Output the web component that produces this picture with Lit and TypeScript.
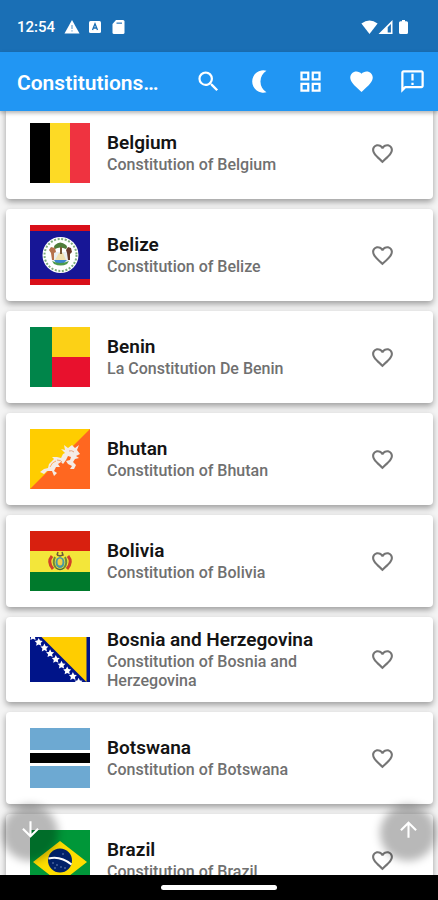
import { LitElement, html, svg, css } from "lit";
import type { SVGTemplateResult } from "lit";
import { customElement, property, state } from "lit/decorators.js";

interface Country {
  name: string;
  document: string;
  flag: SVGTemplateResult;
  flagHeight: number;
}

/* ---------- flags, each on a grid 60 units wide ---------- */

const belgium = svg`
  <rect width="20" height="60" fill="#000"/>
  <rect x="20" width="20" height="60" fill="#fdda25"/>
  <rect x="40" width="20" height="60" fill="#ef3340"/>`;

const belize = svg`
  <rect width="60" height="60" fill="#171696"/>
  <rect width="60" height="6" fill="#d90f19"/>
  <rect y="54" width="60" height="6" fill="#d90f19"/>
  <circle cx="30.5" cy="30" r="18" fill="#fff"/>
  <circle cx="30.5" cy="30" r="16" fill="none" stroke="#7fae7c" stroke-width="2" stroke-dasharray="2 1.6"/>
  <path d="M22 27h17v8q-2 3-8.5 4q-6-1-8.5-4z" fill="#e9eef0"/>
  <path d="M24 35h13l-3 3h-8z" fill="#3a86d0"/>
  <path d="M29 28l4 0l3 7h-11z" fill="#f0e0b0"/>
  <path d="M25 20q5-5 11 0q2 2 0 4q-6-3-11 0q-2-2 0-4z" fill="#4f7d3a"/>
  <path d="M30 22h2v7h-2z" fill="#7b5a38"/>
  <path d="M21 22l4 1l1 4l-2 1l0 7h-2l-1-7l-2-3z" fill="#b5714a"/>
  <path d="M38 22l3 1l1 4l-2 2l0 6h-2l-1-7l-1-3z" fill="#6a3b2b"/>
  <path d="M22 36q8 4 17 0l-2 3q-6 3-13 0z" fill="#4c9b4c"/>`;

const benin = svg`
  <rect width="22" height="60" fill="#00854a"/>
  <rect x="22" width="38" height="30" fill="#fcd116"/>
  <rect x="22" y="30" width="38" height="30" fill="#e8112d"/>`;

const bhutan = svg`
  <rect width="60" height="60" fill="#ff6720"/>
  <path d="M0 0H60L0 60z" fill="#ffcd00"/>
  <path d="M10 43L14 40L18 39L19 35L24 30L22 28L27 28L31 29L33 25L35 24L31 20L35 21L34 16L38 19L42 16L45 19L49 16L47 21L50 25L46 27L49 29L45 30L43 33L46 36L44 40L40 40L42 37L38 35L36 32L40 31L41 28L38 27L36 31L33 35L31 33L28 35L30 38L26 38L24 42L27 44L24 47L22 42L17 42L14 45z" fill="#f4ece6"/>
  <path d="M27 31q4 0 5 2M39 22q3-1 5 1" fill="none" stroke="#e9a27c" stroke-width="1"/>
  <path d="M20 38q2-5 6-6" fill="none" stroke="#ffb060" stroke-width="1"/>`;

const bolivia = svg`
  <rect width="60" height="60" fill="#007a2c"/>
  <rect width="60" height="41" fill="#f3e63a"/>
  <rect width="60" height="20" fill="#d8200f"/>
  <path d="M22 25q-5 6 1 13M38 25q5 6-1 13" fill="none" stroke="#d0402b" stroke-width="3"/>
  <path d="M25 26q-3 6 1 11M35 26q3 6-1 11" fill="none" stroke="#6f8a35" stroke-width="2"/>
  <path d="M27 24l3 1l3-1l-1-3M27 24l1-3" fill="none" stroke="#6d5a38" stroke-width="1.5"/>
  <ellipse cx="30" cy="31.5" rx="4.5" ry="5.5" fill="#4a9aa3"/>
  <ellipse cx="30" cy="31" rx="2.5" ry="3.5" fill="#f2d04a"/>
  <path d="M26 37q4 3 8 0" fill="none" stroke="#4b6a38" stroke-width="1.5"/>`;

const starAt = (x: number, y: number) => svg`
  <path transform="translate(${x} ${y})" fill="#fff"
    d="M0-4L1.3-1.3L4-1L2 1L2.6 3.8L0 2.5L-2.6 3.8L-2 1L-4-1L-1.3-1.3z"/>`;

const bosnia = svg`
  <rect width="60" height="45" fill="#001489"/>
  <path d="M11.5 0H56.5V45z" fill="#ffcd00"/>
  ${[0, 1, 2, 3, 4, 5, 6, 7, 8].map((i) => starAt(3 + i * 5.7, -0.8 + i * 5.7))}`;

const botswana = svg`
  <rect width="60" height="60" fill="#6da9d2"/>
  <rect y="22" width="60" height="16" fill="#fff"/>
  <rect y="25" width="60" height="10" fill="#000"/>`;

const brazil = svg`
  <rect width="60" height="60" fill="#009739"/>
  <path d="M30 11L57 32L30 53L3 32z" fill="#fedd00"/>
  <circle cx="30" cy="30.5" r="12" fill="#012169"/>
  <path d="M18.5 28.5q12-3 23 6" fill="none" stroke="#fff" stroke-width="2"/>
  <g fill="#8fa3d0">
    <circle cx="23" cy="33" r=".7"/><circle cx="27" cy="35" r=".7"/><circle cx="31" cy="37" r=".7"/>
    <circle cx="35" cy="38" r=".7"/><circle cx="25" cy="38" r=".7"/><circle cx="33" cy="24" r=".7"/>
  </g>`;

const constitutionOf = (name: string) => `Constitution of ${name}`;

const countries: Country[] = [
  { name: "Belgium", document: constitutionOf("Belgium"), flag: belgium, flagHeight: 60 },
  { name: "Belize", document: constitutionOf("Belize"), flag: belize, flagHeight: 60 },
  { name: "Benin", document: "La Constitution De Benin", flag: benin, flagHeight: 60 },
  { name: "Bhutan", document: constitutionOf("Bhutan"), flag: bhutan, flagHeight: 60 },
  { name: "Bolivia", document: constitutionOf("Bolivia"), flag: bolivia, flagHeight: 60 },
  {
    name: "Bosnia and Herzegovina",
    document: constitutionOf("Bosnia and Herzegovina"),
    flag: bosnia,
    flagHeight: 45,
  },
  { name: "Botswana", document: constitutionOf("Botswana"), flag: botswana, flagHeight: 60 },
  { name: "Brazil", document: constitutionOf("Brazil"), flag: brazil, flagHeight: 60 },
];

/* ---------- icons on the 24-unit grid ---------- */

const icons = {
  search: svg`<path d="M15.5 14h-.79l-.28-.27A6.471 6.471 0 0 0 16 9.5 6.5 6.5 0 1 0 9.5 16c1.61 0 3.09-.59 4.23-1.57l.27.28v.79l5 4.99L20.49 19l-4.99-5zm-6 0C7.01 14 5 11.99 5 9.5S7.01 5 9.5 5 14 7.01 14 9.5 11.99 14 9.5 14z"/>`,
  moon: svg`<path d="M18.2 2.5A9.9 9.9 0 1 0 18.2 21.5A11.1 11.1 0 0 1 18.2 2.5z"/>`,
  grid: svg`<path fill-rule="evenodd" d="M3 3v8h8V3H3zm6 6H5V5h4v4zm-6 4v8h8v-8H3zm6 6H5v-4h4v4zm4-16v8h8V3h-8zm6 6h-4V5h4v4zm-6 4v8h8v-8h-8zm6 6h-4v-4h4v4z"/>`,
  heart: svg`<path d="M12 21.35l-1.45-1.32C5.4 15.36 2 12.28 2 8.5 2 5.42 4.42 3 7.5 3c1.74 0 3.41.81 4.5 2.09C13.09 3.81 14.76 3 16.5 3 19.58 3 22 5.42 22 8.5c0 3.78-3.4 6.86-8.55 11.54L12 21.35z"/>`,
  heartOutline: svg`<path d="M16.5 3c-1.74 0-3.41.81-4.5 2.09C10.91 3.81 9.24 3 7.5 3 4.42 3 2 5.42 2 8.5c0 3.78 3.4 6.86 8.55 11.54L12 21.35l1.45-1.32C18.6 15.36 22 12.28 22 8.5 22 5.42 19.58 3 16.5 3zm-4.4 15.55l-.1.1-.1-.1C7.14 14.24 4 11.39 4 8.5 4 6.5 5.5 5 7.5 5c1.54 0 3.04.99 3.57 2.36h1.87C13.46 5.99 14.96 5 16.5 5c2 0 3.5 1.5 3.5 3.5 0 2.89-3.14 5.74-7.9 10.05z"/>`,
  feedback: svg`<path d="M20 2H4c-1.1 0-1.99.9-1.99 2L2 22l4-4h14c1.1 0 2-.9 2-2V4c0-1.1-.9-2-2-2zm0 14H5.17L4 17.17V4h16v12zM11 5h2v6h-2zm0 8h2v2h-2z"/>`,
  down: svg`<path d="M20 12l-1.41-1.41L13 16.17V4h-2v12.17l-5.58-5.59L4 12l8 8 8-8z"/>`,
  up: svg`<path d="M4 12l1.41 1.41L11 7.83V20h2V7.83l5.58 5.59L20 12l-8-8-8 8z"/>`,
};

const icon = (shape: SVGTemplateResult) =>
  html`<svg class="icon" viewBox="0 0 24 24" aria-hidden="true">${shape}</svg>`;

@customElement("country-card")
export class CountryCard extends LitElement {
  @property({ attribute: false }) country!: Country;
  @state() private liked = false;

  static styles = css`
    :host {
      display: flex;
      align-items: center;
      gap: 17px;
      padding-left: 24px;
      padding-right: 32px;
      background: #fff;
      border-radius: 4px;
      box-shadow: 0 3px 6px rgba(0, 0, 0, 0.36);
    }
    .flag {
      flex: none;
      width: 60px;
      margin: 16px 0;
      display: block;
    }
    .text {
      flex: 1;
      min-width: 0;
      padding: 12px 0;
    }
    .name {
      margin: 0;
      padding-bottom: 1px;
      font-size: 19px;
      line-height: 22px;
      font-weight: 600;
      color: #141414;
    }
    .document {
      margin: 0;
      font-size: 16px;
      line-height: 19px;
      font-weight: 500;
      color: #707070;
    }
    .like {
      flex: none;
      width: 37px;
      height: 37px;
      padding: 6px;
      border: 0;
      background: none;
      color: #757575;
      cursor: pointer;
    }
    .icon {
      display: block;
      width: 25px;
      height: 25px;
      fill: currentColor;
    }
  `;

  render() {
    const { name, document, flag, flagHeight } = this.country;
    return html`
      <svg class="flag" viewBox="0 0 60 ${flagHeight}" role="img" aria-label="Flag of ${name}">${flag}</svg>
      <div class="text">
        <h2 class="name">${name}</h2>
        <p class="document">${document}</p>
      </div>
      <button
        class="like"
        aria-label="Add ${name} to favourites"
        aria-pressed=${this.liked}
        @click=${() => (this.liked = !this.liked)}
      >
        ${icon(this.liked ? icons.heart : icons.heartOutline)}
      </button>
    `;
  }
}

@customElement("app-root")
export class AppRoot extends LitElement {
  static styles = css`
    :host {
      display: flex;
      flex-direction: column;
      height: 100vh;
      overflow: hidden;
      background: #f4f4f4;
      font-family: Roboto, "Liberation Sans", sans-serif;
    }
    .status {
      flex: none;
      display: flex;
      align-items: center;
      height: 52px;
      padding: 2px 29px 0 17px;
      box-sizing: border-box;
      background: #1a6fb5;
      color: #fff;
      font-size: 15px;
      font-weight: 500;
    }
    .status svg {
      display: block;
      height: 16px;
      fill: #fff;
    }
    .notices {
      display: flex;
      gap: 8px;
      margin-left: 9px;
      flex: 1;
    }
    .signals {
      display: flex;
    }
    .bar {
      flex: none;
      display: flex;
      align-items: center;
      height: 59px;
      padding-left: 17px;
      background: #2196f3;
      color: #fff;
      box-shadow: 0 2px 4px rgba(0, 0, 0, 0.3);
      z-index: 1;
    }
    .title {
      flex: 1;
      margin: 0;
      padding-top: 3px;
      font-size: 21px;
      font-weight: 600;
      white-space: nowrap;
    }
    .action {
      width: 51px;
      height: 51px;
      padding: 12px;
      border: 0;
      background: none;
      color: #fff;
      cursor: pointer;
    }
    .icon {
      display: block;
      width: 27px;
      height: 27px;
      fill: currentColor;
    }
    .content {
      flex: 1;
      min-height: 0;
      position: relative;
      margin-top: -4px;
    }
    .list {
      height: 100%;
      box-sizing: border-box;
      overflow-y: auto;
      scrollbar-width: none;
      display: flex;
      flex-direction: column;
      gap: 10px;
      padding: 0 5px 0 6px;
    }
    .list country-card {
      flex: none;
    }
    .jump {
      position: absolute;
      bottom: 14px;
      width: 56px;
      height: 56px;
      padding: 0 0 8px;
      border: 0;
      background: none;
      color: #fff;
      cursor: pointer;
      display: grid;
      place-items: center;
    }
    .jump::before {
      content: "";
      position: absolute;
      inset: 0;
      border-radius: 50%;
      background: rgba(0, 0, 0, 0.28);
      filter: blur(4px);
    }
    .jump .icon {
      position: relative;
      width: 25px;
      height: 25px;
    }
    .to-end {
      left: 2px;
    }
    .to-start {
      right: 2px;
    }
    .nav {
      flex: none;
      height: 25px;
      background: #000;
      display: flex;
      justify-content: center;
      align-items: center;
      z-index: 1;
    }
    .handle {
      width: 116px;
      height: 5px;
      border-radius: 3px;
      background: #fff;
    }
  `;

  private jump(toEnd: boolean) {
    const list = this.renderRoot.querySelector(".list");
    list?.scrollTo({ top: toEnd ? list.scrollHeight : 0, behavior: "smooth" });
  }

  private action(label: string, shape: SVGTemplateResult) {
    return html`<button class="action" aria-label=${label}>${icon(shape)}</button>`;
  }

  render() {
    return html`
      <div class="status">
        <span>12:54</span>
        <div class="notices">
          <svg viewBox="0 0 16 16" width="16" aria-hidden="true">
            <path d="M8 1L15.5 14.5H.5z" />
            <path d="M7.3 6h1.4v4H7.300zM7.3 11.2h1.4v1.4H7.300z" fill="#7fb0d8" />
          </svg>
          <svg viewBox="0 0 14 16" width="14" aria-hidden="true">
            <rect x="1" y="2" width="12" height="12" rx="1.5" />
            <path d="M4.5 11L7 4.8L9.5 11M5.5 9h3" fill="none" stroke="#1a6fb5" stroke-width="1.3" />
          </svg>
          <svg viewBox="0 0 16 16" width="16" aria-hidden="true">
            <path d="M6 1h7q1.5 0 1.5 1.5v11q0 1.5-1.5 1.5H4q-1.5 0-1.5-1.5V5z" />
            <path d="M6.5 3.4h5.5v1.6h-5.5z" fill="#5c97cb" />
          </svg>
        </div>
        <div class="signals">
          <svg viewBox="0 0 17 16" width="17" aria-hidden="true">
            <path d="M8.5 15L.4 4.5Q8.5-1.5 16.6 4.5z" />
          </svg>
          <svg viewBox="0 0 20 16" width="20" aria-hidden="true">
            <path
              fill-rule="evenodd"
              d="M14.5 1V15H.5zM12.9 5L9.7 8.2V13.4H12.900z"
            />
          </svg>
          <svg viewBox="0 0 11 16" width="11" aria-hidden="true">
            <path d="M4 1h3v1.2h1.5Q10 2.2 10 3.7v9.8Q10 15 8.5 15h-6Q1 15 1 13.5V3.7q0-1.5 1.5-1.5H4z" />
          </svg>
        </div>
      </div>
      <header class="bar">
        <h1 class="title">Constitutions…</h1>
        ${this.action("Search", icons.search)}
        ${this.action("Dark mode", icons.moon)}
        ${this.action("Grid view", icons.grid)}
        ${this.action("Favourites", icons.heart)}
        ${this.action("Feedback", icons.feedback)}
      </header>
      <main class="content">
        <div class="list">
          ${countries.map((c) => html`<country-card .country=${c}></country-card>`)}
        </div>
        <button class="jump to-end" aria-label="Scroll to end" @click=${() => this.jump(true)}>
          ${icon(icons.down)}
        </button>
        <button class="jump to-start" aria-label="Scroll to start" @click=${() => this.jump(false)}>
          ${icon(icons.up)}
        </button>
      </main>
      <div class="nav"><div class="handle"></div></div>
    `;
  }
}
